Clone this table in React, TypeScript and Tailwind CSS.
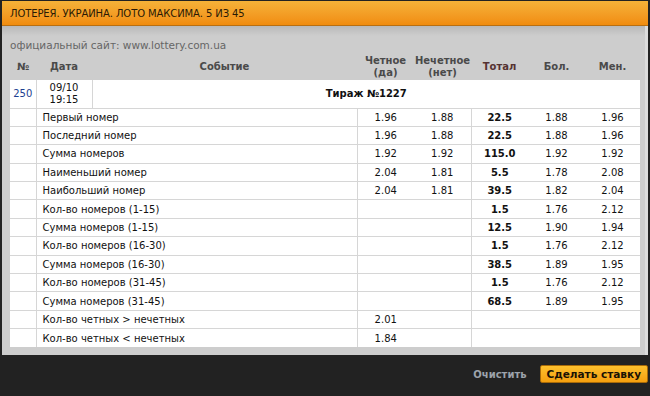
import React from 'react';

type Row = {
  name: string;
  even?: string;
  odd?: string;
  total?: string;
  over?: string;
  under?: string;
};

const rows: Row[] = [
  { name: 'Первый номер', even: '1.96', odd: '1.88', total: '22.5', over: '1.88', under: '1.96' },
  { name: 'Последний номер', even: '1.96', odd: '1.88', total: '22.5', over: '1.88', under: '1.96' },
  { name: 'Сумма номеров', even: '1.92', odd: '1.92', total: '115.0', over: '1.92', under: '1.92' },
  { name: 'Наименьший номер', even: '2.04', odd: '1.81', total: '5.5', over: '1.78', under: '2.08' },
  { name: 'Наибольший номер', even: '2.04', odd: '1.81', total: '39.5', over: '1.82', under: '2.04' },
  { name: 'Кол-во номеров (1-15)', total: '1.5', over: '1.76', under: '2.12' },
  { name: 'Сумма номеров (1-15)', total: '12.5', over: '1.90', under: '1.94' },
  { name: 'Кол-во номеров (16-30)', total: '1.5', over: '1.76', under: '2.12' },
  { name: 'Сумма номеров (16-30)', total: '38.5', over: '1.89', under: '1.95' },
  { name: 'Кол-во номеров (31-45)', total: '1.5', over: '1.76', under: '2.12' },
  { name: 'Сумма номеров (31-45)', total: '68.5', over: '1.89', under: '1.95' },
  { name: 'Кол-во четных > нечетных', even: '2.01' },
  { name: 'Кол-во четных < нечетных', even: '1.84' },
];

export default function App() {
  return (
    <div
      className="w-[650px] h-[396px] bg-[#222222] flex flex-col overflow-hidden text-[#111]"
      style={{ fontFamily: '"DejaVu Sans", Verdana, sans-serif' }}
    >
      {/* Title bar */}
      <div className="mt-px mx-[2px] h-[25px] flex items-center pl-[8px] bg-gradient-to-b from-[#f5b238] to-[#f18c0e] border-b border-[#b86f12]">
        <span className="text-[10px] uppercase text-[#2a1a05] tracking-[-0.1px]">
          Лотерея. Украина. Лото Максима. 5 из 45
        </span>
      </div>

      {/* Panel */}
      <div className="mx-[2px] h-[329px] bg-gradient-to-b from-[#b9b9b9] via-[#cdcdcd] via-[3%] to-[#cdcdcd] border-r-[3px] border-[#dcdcdc] px-[8px] pt-[13px]">
        <div className="text-[10.5px] text-[#666] leading-[13px]">официальный сайт: www.lottery.com.ua</div>

        <table className="mt-[2px] border-collapse table-fixed w-[630px] text-[10px]">
          <colgroup>
            <col className="w-[26px]" />
            <col className="w-[56px]" />
            <col className="w-[265px]" />
            <col className="w-[57px]" />
            <col className="w-[57px]" />
            <col className="w-[57px]" />
            <col className="w-[57px]" />
            <col className="w-[55px]" />
          </colgroup>
          <thead>
            <tr className="h-[26px] text-[#4a4a4a] font-bold leading-[12px]">
              <th className="font-bold">№</th>
              <th className="font-bold">Дата</th>
              <th className="font-bold">Событие</th>
              <th className="font-bold">
                Четное
                <br />
                (да)
              </th>
              <th className="font-bold">
                Нечетное
                <br />
                (нет)
              </th>
              <th className="font-bold text-[#553232]">Тотал</th>
              <th className="font-bold">Бол.</th>
              <th className="font-bold">Мен.</th>
            </tr>
          </thead>
          <tbody className="bg-white">
            <tr className="h-[28px] border-b border-[#d6d6d6]">
              <td className="text-center text-[#1d3f91] border-r border-[#d6d6d6]">250</td>
              <td className="text-center leading-[12px] border-r border-[#d6d6d6]">
                09/10
                <br />
                19:15
              </td>
              <td colSpan={6} className="text-center font-bold">
                Тираж №1227
              </td>
            </tr>
            {rows.map((r, i) => (
              <tr key={i} className="h-[18.4px] border-b border-[#d6d6d6] last:border-b-0">
                <td className="border-r border-[#d6d6d6]"></td>
                <td colSpan={2} className="pl-[6px] border-r border-[#d6d6d6] whitespace-nowrap">
                  {r.name}
                </td>
                <td className="text-center">{r.even}</td>
                <td className="text-center border-r border-[#d6d6d6]">{r.odd}</td>
                <td className="text-center font-bold">{r.total}</td>
                <td className="text-center">{r.over}</td>
                <td className="text-center">{r.under}</td>
              </tr>
            ))}
          </tbody>
        </table>
      </div>

      {/* Footer */}
      <div className="flex-1 flex items-center justify-end gap-[13px] pr-[2px] pb-[3px]">
        <button className="text-[10px] text-[#9ca3ab] font-bold">Очистить</button>
        <button className="h-[18px] px-[6px] rounded-[2px] border border-[#a86a08] bg-gradient-to-b from-[#fdc02c] to-[#f59f0e] text-[10.5px] font-bold text-[#1a1204] leading-none">
          Сделать ставку
        </button>
      </div>
    </div>
  );
}
